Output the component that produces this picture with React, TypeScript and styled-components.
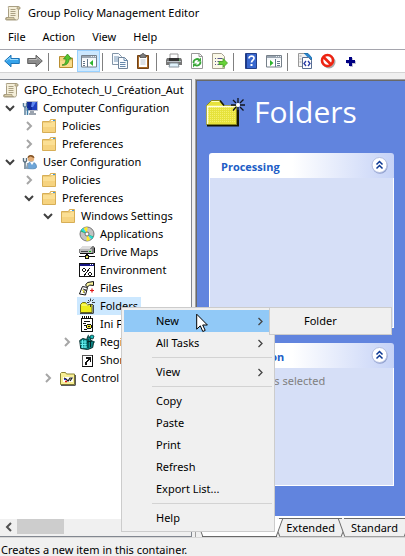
import React from "react";
import styled, { createGlobalStyle, css } from "styled-components";

const GlobalStyle = createGlobalStyle`
  *, *::before, *::after { box-sizing: border-box; }
  html, body { margin: 0; padding: 0; }
  body { background: #f0f0f0; }
  body, button { font-family: "Noto Sans", "Open Sans", sans-serif; font-size: 11px; line-height: 18px; color: #000; }
  button { margin: 0; padding: 0; border: 0; background: none; }
  ul { list-style: none; margin: 0; padding: 0; }
  svg { display: block; flex: none; }
`;

const Window = styled.div`
  position: relative;
  display: flex;
  flex-direction: column;
  min-height: 100vh;
  overflow: hidden;
  white-space: nowrap;
`;

const TitleBar = styled.header`
  display: flex;
  align-items: center;
  gap: 7px;
  height: 25px;
  padding-left: 5px;
  background: #fff;
`;

const WindowTitle = styled.h1`
  margin: 0;
  font-size: 11px;
  font-weight: 400;
`;

const MenuBar = styled.nav`
  display: flex;
  height: 24px;
  padding: 0 0 0 8px;
  gap: 17px;
  background: #fff;
`;

const MenuBarItem = styled.button`
  height: 24px;
`;

const Toolbar = styled.div`
  display: flex;
  height: 24px;
  border-top: 1px solid #a5a5ad;
  border-bottom: 1px solid #d4d4d4;
  background: #fff;
`;

const ToolButton = styled.button<{ $active?: boolean }>`
  display: grid;
  place-items: center;
  width: 23px;
  height: 22px;
  border: 1px solid ${(p) => (p.$active ? "#99d1ff" : "transparent")};
  background: ${(p) => (p.$active ? "#cce8ff" : "transparent")};
`;

const ToolDivider = styled.span`
  width: 8px;
  height: 18px;
  margin-top: 3px;
  &::before {
    content: "";
    display: block;
    width: 1px;
    height: 18px;
    margin-left: 2px;
    background: #808080;
  }
`;

const Workspace = styled.main`
  display: flex;
  flex: 1;
  gap: 3px;
  margin-top: 6px;
`;

const TreePane = styled.aside`
  display: flex;
  flex-direction: column;
  flex: none;
  width: 192px;
  border: 1px solid #828790;
  border-left: 0;
  background: #fff;
`;

const Tree = styled.ul`
  flex: 1;
  padding-top: 1px;
  overflow: hidden;
`;

const TreeRow = styled.li<{ $level: number }>`
  display: flex;
  align-items: center;
  gap: 2px;
  height: 18px;
  padding-left: ${(p) => (p.$level === 0 ? 1 : p.$level * 19 - 17)}px;
`;

const Expander = styled.button<{ $open?: boolean }>`
  display: grid;
  place-items: center;
  flex: none;
  width: 16px;
  height: 18px;
  color: ${(p) => (p.$open ? "#404040" : "#a6a6a6")};
`;

const ExpanderSpace = styled.span`
  flex: none;
  width: 16px;
`;

const TreeEntry = styled.button<{ $selected?: boolean }>`
  display: flex;
  align-items: center;
  gap: 5px;
  height: 18px;
  padding: 0 3px 0 2px;
  background: ${(p) => (p.$selected ? "#cce8ff" : "transparent")};
`;

const ScrollBar = styled.div`
  display: flex;
  height: 17px;
  padding-bottom: 2px;
  background: #f0f0f0;
`;

const ScrollArrow = styled.button`
  display: grid;
  place-items: center;
  width: 17px;
  color: #505050;
`;

const ScrollThumb = styled.span`
  width: 47px;
  background: #cdcdcd;
`;

const DetailPane = styled.section`
  display: flex;
  flex-direction: column;
  flex: 1;
  min-width: 0;
  border-top: 1px solid #a0a0a0;
  border-left: 1px solid #a0a0a0;
`;

const DetailBody = styled.div`
  flex: 1;
  padding: 0 11px 30px 12px;
  border-top: 1px solid #696969;
  border-left: 1px solid #696969;
  background: #6184de;
`;

const DetailHeading = styled.div`
  display: flex;
  align-items: center;
  gap: 9px;
  height: 72px;
  padding-bottom: 10px;
  margin-left: -4px;
`;

const DetailTitle = styled.h2`
  margin: 0;
  font-family: "Open Sans", sans-serif;
  font-size: 30px;
  line-height: 40px;
  font-weight: 400;
  color: #fff;
`;

const Panel = styled.section<{ $tall?: boolean }>`
  display: flex;
  flex-direction: column;
  height: ${(p) => (p.$tall ? 175 : 143)}px;
  margin-bottom: ${(p) => (p.$tall ? 15 : 0)}px;
`;

const PanelHeader = styled.header`
  display: flex;
  align-items: center;
  justify-content: space-between;
  height: 25px;
  padding: 0 6px 0 12px;
  border-radius: 3px 3px 0 0;
  background: linear-gradient(90deg, #fff 0%, #fff 45%, #c6d3f7 100%);
`;

const PanelTitle = styled.h3`
  margin: 3px 0 0;
  font-family: "Open Sans", sans-serif;
  font-size: 11px;
  font-weight: 700;
  color: #215dc6;
`;

const PanelToggle = styled.button`
  width: 17px;
  height: 20px;
`;

const PanelBody = styled.div`
  flex: 1;
  padding: 4px 13px;
  border: 1px solid #fff;
  border-top: 0;
  background: #d6dff7;
  color: #808080;
`;

const TabStrip = styled.div`
  display: flex;
  height: 21px;
  padding: 2px 0 0 6px;
  background: linear-gradient(#fff 2px, #f0f0f0 2px);
  overflow: hidden;
`;

const edge = css`
  content: "";
  position: absolute;
  top: 0;
  bottom: 0;
  width: 6px;
`;

const Tab = styled.button<{ $active?: boolean }>`
  position: relative;
  z-index: ${(p) => (p.$active ? 1 : 0)};
  flex: none;
  height: 19px;
  padding: 0 7px;
  border-top: 1px solid ${(p) => (p.$active ? "#fff" : "#696969")};
  border-bottom: 1px solid ${(p) => (p.$active ? "#696969" : "#a0a0a0")};
  line-height: 18px;
  background: ${(p) => (p.$active ? "#fff" : "#f0f0f0")};
  & + & { margin-left: 2px; }
  &::before {
    ${edge}
    left: -3px;
    border-left: 1px solid #696969;
    background: inherit;
    transform: skewX(20deg);
  }
  &::after {
    ${edge}
    right: -3px;
    border-right: 1px solid #696969;
    background: inherit;
    transform: skewX(-20deg);
  }
`;

const TabText = styled.span`
  position: relative;
  z-index: 1;
`;

const StatusBar = styled.footer`
  height: 19px;
  padding: 3px 1px 0;
  border-top: 1px solid #d7d7d7;
  line-height: 18px;
`;

const PopupMenu = styled.div<{ $sub?: boolean }>`
  position: absolute;
  z-index: ${(p) => (p.$sub ? 3 : 2)};
  top: 307px;
  left: ${(p) => (p.$sub ? 269 : 121)}px;
  width: ${(p) => (p.$sub ? 123 : 154)}px;
  padding: 2px;
  border: 1px solid #ccc;
  background: #f0f0f0;
`;

const MenuItem = styled.button<{ $hot?: boolean }>`
  display: flex;
  align-items: center;
  justify-content: space-between;
  width: 100%;
  height: 22px;
  padding: 0 8px 0 32px;
  background: ${(p) => (p.$hot ? "#91c9f7" : "transparent")};
  text-align: left;
`;

const MenuDivider = styled.div`
  height: 7px;
  margin-left: 28px;
  padding-top: 3px;
  &::before {
    content: "";
    display: block;
    height: 1px;
    background: #d3d3d3;
  }
`;

const Pointer = styled.div`
  position: absolute;
  z-index: 4;
  top: 313px;
  left: 196px;
`;

type IconProps = { children: React.ReactNode; w?: number; h?: number; crisp?: boolean };
const Icon = ({ children, w = 16, h = 16, crisp }: IconProps) => (
  <svg width={w} height={h} viewBox={`0 0 ${w} ${h}`} fill="none" aria-hidden="true" shapeRendering={crisp ? "crispEdges" : undefined}>
    {children}
  </svg>
);

const Chevron = ({ dir }: { dir: "down" | "right" | "left" }) => (
  <Icon w={10} h={10}>
    <path
      d={dir === "down" ? "M1 3l4 4 4-4" : dir === "right" ? "M3 1l4 4-4 4" : "M7 1L3 5l4 4"}
      stroke="currentColor"
      strokeWidth="2"
    />
  </Icon>
);

const SubmenuArrow = () => (
  <Icon w={7} h={9}>
    <path d="M1.500 1l3.500 3.500L1.500 8" stroke="#444" strokeWidth="1.300" />
  </Icon>
);

const ScrollIcon = () => (
  <Icon>
    <path d="M3.500 1.500h10c2 0 2 3 0 3v8c0 2-1 2.500-2 2.500h-10c-1.500 0-1.500-2.500 0-2.500h2v-9c0-1-.5-2 0-2z" fill="#f5efd9" stroke="#a99f83" />
    <path d="M12 2.500c1.500-1.500 3-.5 2.500 1.500H12zM1.500 12.500H9c0 2 1 2 1.500 2h-9z" fill="#d9cda8" stroke="#9b9074" strokeWidth=".7" />
    <path d="M5.500 4.500h5M5.500 6.500h5M5.500 8.500h5M5.500 10.500h5" stroke="#aaa083" />
  </Icon>
);

const FolderIcon = () => (
  <Icon>
    <path d="M1.500 3.500h7l1-2h5v13h-13z" fill="#efcd79" stroke="#d7ae56" />
    <path d="M2 5h8l1-1h3v10H2z" fill="#fbdf94" />
    <path d="M2 9h12v5H2z" fill="#f6d37f" />
    <path d="M10 2.500h3" stroke="#fff" />
    <path d="M12 2.500h2" stroke="#3f9ae0" />
  </Icon>
);

const ComputerIcon = () => (
  <Icon>
    <path d="M4.500 1.500h11v9h-11z" fill="#1c3fc0" stroke="#b9bec8" />
    <path d="M5 2h5v8H5z" fill="#102a9b" />
    <path d="M10 2h4l-3 5h-2z" fill="#5c86f0" />
    <path d="M8 11h4v2h2v2H7v-2h1z" fill="#9aa3ae" />
    <path d="M1.500 3v3l1 1h1l1-1V3M3 7v8" stroke="#5a7f9c" strokeWidth="1.500" />
    <path d="M5.500 8v7" stroke="#3e7ea8" strokeWidth="1.500" />
  </Icon>
);

const UserIcon = () => (
  <Icon>
    <circle cx="9" cy="4.500" r="3.200" fill="#e3ad77" />
    <path d="M5.500 4C5.500 0 12 0 12.500 4c-2 0-3-1.500-4-1.500S7 4 5.500 4z" fill="#805225" />
    <path d="M4.500 14.500C5 9.500 7 8 9.500 8s5 1.500 5 5c0 1.500-2 1.800-4 1.800z" fill="#6fa6d8" stroke="#4a7eac" strokeWidth=".7" />
    <path d="M8 8l2 3 2-3z" fill="#fff" />
    <path d="M1.500 4v3l1 1h1l1-1V4M3 8v7" stroke="#5a7080" strokeWidth="1.400" />
    <path d="M5.500 9v6" stroke="#8fa1ad" strokeWidth="1.400" />
  </Icon>
);

const DiscIcon = () => (
  <Icon>
    <circle cx="8" cy="8" r="7" fill="#c3c3c3" stroke="#777" />
    <path d="M8 8L5 1.700 8.500 1zM8 8l3 6.300-3.500.7z" fill="#ffee20" />
    <path d="M8 8L1.500 5.500 3 3zM8 8l6.500 2.500L13 13z" fill="#27b06f" />
    <path d="M8 8L2 4l2-2zM8 8l6 3-1.500 2z" fill="#28dede" />
    <circle cx="8" cy="8" r="2" fill="#fff" stroke="#555" strokeWidth=".8" />
  </Icon>
);

const DriveIcon = () => (
  <Icon crisp>
    <path d="M3 2h11l2 2v4l-2 2H1L0 8V5z" fill="#808080" />
    <path d="M3 2h10l-2 3H1z" fill="#dedede" />
    <path d="M1 5h12v4H1z" fill="#b9b9b9" />
    <path d="M2 7h7v1H2z" fill="#444" />
    <path d="M10 7h2v1h-2z" fill="#0c0" />
    <path d="M1 9h13v1H1zM15 4h1v5h-1zM7 10h2v2H7zM0 12h16v1H0zM6 11h4v4H6z" fill="#111" />
    <path d="M7 12h2v2H7z" fill="#e5df63" />
  </Icon>
);

const EnvironmentIcon = () => (
  <Icon crisp>
    <path d="M.5 1.500h15v13H.5z" fill="#fff" stroke="#111" />
    <path d="M1 2h14v2H1z" fill="#151583" />
    <path d="M11 2h1v1h-1zM13 2h1v1h-1z" fill="#fff" />
    <path d="M4 6h2v1h1v2H6v1H4V9H3V7h1zM10 10h2v1h1v2h-1v1h-2v-1H9v-2h1z" fill="#111" />
    <path d="M4 7h2v2H4zM10 11h2v2h-2z" fill="#fff" />
    <path d="M11 6L5 14" stroke="#111" />
  </Icon>
);

const FilesIcon = () => (
  <Icon>
    <path d="M3.500 6.500l5 1-2 7.500-6-1 1.500-4z" fill="#fff" stroke="#111" />
    <path d="M8.500 2.500l6-1v4l-4-.5-2 2-2-2z" fill="#f8f39b" stroke="#111" />
    <path d="M4 9l3 1-3 2 2 1" stroke="#111" strokeWidth=".8" />
    <path d="M3 10l2 1-1 2" stroke="#dfd329" />
    <path d="M11 10.500h4M13 8.500v4" stroke="#e01818" strokeWidth="1.200" />
  </Icon>
);

const NewFolderIcon = () => (
  <Icon>
    <path d="M1.500 14.500v-8l2-2h3l1.500 2h5v8z" fill="#eeee1b" stroke="#74741a" />
    <path d="M2.500 7h8" stroke="#ffffaa" />
    <path d="M1 15.300h13.300V8" stroke="#222" />
    <path d="M11.500.5v3M11.500 6v3M8 4.500h2.500M13 4.500h3M9 2l1.500 1.500M14.500 1.500L13 3M9 7.500l1.500-1.500M13 6l2 2" stroke="#292929" strokeWidth=".9" />
    <circle cx="11.500" cy="4.500" r="1" fill="#fff" />
  </Icon>
);

const LargeNewFolderIcon = () => (
  <Icon w={40} h={30}>
    <path d="M2 28.500h31V13" stroke="#151500" strokeWidth="2" />
    <path d="M1.500 27.500V8.500l5-5h8l4 5h13v19z" fill="#e6e23c" stroke="#8a8a20" />
    <path d="M3 10.500h27M3 12.500h27M3 14.500h27M3 16.500h27M3 18.500h27M3 20.500h27M3 22.500h27M3 24.500h27" stroke="#f4f06a" strokeDasharray="1 1" />
    <path d="M2.500 27V9.500h28" stroke="#ffffe0" strokeWidth="1.500" />
    <path d="M6.500 4.500h8" stroke="#ffffc0" />
    <path d="M15 3.500l4 5" stroke="#1a1a00" strokeWidth="1.500" />
    <path d="M33 1v5M33 10v5M26 8h5M35 8h5M28 3l3 3M35 10l3.500 3.500M38.500 2.500L35 6M31 10l-3 3.500" stroke="#10131c" strokeWidth="1.300" />
    <circle cx="33" cy="8" r="2" fill="#fff" />
  </Icon>
);

const IniIcon = () => (
  <Icon crisp>
    <path d="M2.500 2.500h11v13h-11z" fill="#fff" stroke="#111" />
    <path d="M3 0h1v3H3zM5 0h1v3H5zM7 0h1v3H7zM9 0h1v3H9zM11 0h1v3h-1zM5 5h6v1H5zM4 7h3v1H4zM5 9h2v1H5zM5 13h3v1H5z" fill="#111" />
    <path d="M8 8h4v1h1v3h-1v1H8v-1H7V9h1z" fill="#111" />
    <path d="M8 9h4v3H8z" fill="#efe42c" />
    <path d="M9 10h2v1H9z" fill="#111" />
  </Icon>
);

const RegistryIcon = () => (
  <Icon>
    <path d="M.7 6.500l3-2 4 1 1-3 3 1v3l3 1-1 6-5 2-7-1z" fill="#0c8585" stroke="#052b2b" />
    <path d="M1.500 8h6M1.500 10.500h6M2 13h6M3.500 6v8M6 6v8" stroke="#65efef" />
    <path d="M9 5v9M11.500 7v6M8 8l5-1" stroke="#022" />
    <path d="M11 2l2-1 2 1-1 3-3-1z" fill="#18bcbc" stroke="#033" strokeWidth=".8" />
    <path d="M8.500 2l1.500-1M15 7v2" stroke="#055" />
  </Icon>
);

const ShortcutIcon = () => (
  <Icon crisp>
    <path d="M3.500 3.500h10v11h-10z" fill="#fff" stroke="#555" />
    <path d="M3 14h11v1H3zM13 3h1v12h-1z" fill="#111" />
    <path d="M7 5h5v5h-1V8h-1v1H9v1H8v3H6v-3h1V9h1V8h1V7H7z" fill="#111" />
  </Icon>
);

const ControlPanelIcon = () => (
  <Icon>
    <path d="M.5 14.500v-11l1-1h4l1 1.500h8v10.500z" fill="#f7ee94" stroke="#8b8434" />
    <path d="M1 15.300h14.300V5" stroke="#333" />
    <path d="M3 7h10v5H3z" fill="#fff" />
    <path d="M4 8l2 1 2 2 2-3h2l-2 3" stroke="#222" strokeWidth="1.200" />
    <path d="M5 11.500h2" stroke="#d11" strokeWidth="1.300" />
    <path d="M4 9.500h2" stroke="#23d" strokeWidth="1.200" />
  </Icon>
);

const ArrowIcon = ({ back }: { back?: boolean }) => (
  <Icon>
    <g transform={back ? undefined : "matrix(-1 0 0 1 16 0)"}>
      <path d="M.7 8L7 2.200v3.300h8.300v5H7v3.300z" fill={back ? "#36a3ea" : "#8b8b8b"} stroke={back ? "#1d75b8" : "#606060"} />
      <path d="M2.500 7.500L6 4.500v2h8" stroke={back ? "#9bdbff" : "#b9b9b9"} />
    </g>
  </Icon>
);

const UpFolderIcon = () => (
  <Icon>
    <path d="M1.500 14.500v-11h5l1.500 1.500h6.500v9.500z" fill="#f2d27d" stroke="#b98e31" />
    <path d="M2 8h12v6H2z" fill="#f9dc8c" />
    <path d="M4 12c3 0 4-3 4-6H5.500L9.500 1l4 5h-2.500c0 4-3 7-7 6z" fill="#55c42f" stroke="#348b18" strokeWidth=".8" />
  </Icon>
);

const WindowIcon = ({ left }: { left?: boolean }) => (
  <Icon>
    <path d="M.5 2.500h15v11.500H.5z" fill="#fff" stroke="#76808a" />
    <path d="M1 3h14v2H1z" fill="#9aa5b0" />
    <path d="M10 3.500h1M12 3.500h1M14 3.500h1M1 6h14" stroke="#e7edf2" />
    <path d={left ? "M6.500 6v8M2 8.500h2M2 10.500h2M2 12.500h2" : "M9.500 6v8M11 8.500h3M11 10.500h3M11 12.500h3"} stroke="#64788c" />
    <path d={left ? "M12 7v6L8.500 10z" : "M4 7v6l3.500-3z"} fill="#2eb52e" />
  </Icon>
);

const CopyIcon = () => (
  <Icon>
    <path d="M.5.5h6L9.500 3.500v8h-9z" fill="#f9fcff" stroke="#8295a8" />
    <path d="M2 4h5M2 6h5M2 8h5" stroke="#7796b5" />
    <path d="M6.500 4.500h6l3 3v8h-9z" fill="#f9fcff" stroke="#71859a" />
    <path d="M12 4.500v3h3.500M8 9.500h5.500M8 11.500h5.500M8 13.500h5.500" stroke="#6689ad" />
  </Icon>
);

const PasteIcon = () => (
  <Icon>
    <path d="M2.500 2.500h11v13h-11z" fill="#a96925" stroke="#724217" />
    <path d="M4 4h8v10H4z" fill="#fff" />
    <path d="M5.500 7h5M5.500 9h5M5.500 11h5" stroke="#b9c3cc" />
    <path d="M5 2h1.500c0-2 3-2 3 0H11v2.500H5z" fill="#7e7e7e" stroke="#444" strokeWidth=".7" />
  </Icon>
);

const PrintIcon = () => (
  <Icon>
    <path d="M4 1h8v5H4z" fill="#fff" stroke="#999" />
    <path d="M1 5h14l1 2v5H0V7z" fill="#777" />
    <path d="M3 5h10v3H3z" fill="#333" />
    <path d="M1 8.500h14" stroke="#bcc2c8" />
    <path d="M4 10h8l1 4H3z" fill="#dff2fb" stroke="#86939c" />
    <path d="M13 7h1" stroke="#48d848" />
  </Icon>
);

const RefreshIcon = () => (
  <Icon>
    <path d="M2.500.5h8l3 3v12h-11z" fill="#fff" stroke="#999" />
    <path d="M10 .5v3h3.500" stroke="#999" />
    <path d="M4.500 10A3.600 3.600 0 0 1 10.500 7M11.500 8.500A3.600 3.600 0 0 1 6 12" stroke="#38a838" strokeWidth="1.800" />
    <path d="M12 4.500v4H8zM4 14.500v-4h4z" fill="#38a838" />
  </Icon>
);

const ExportIcon = () => (
  <Icon>
    <path d="M.5.5h9l3 3v12H.5z" fill="#fbf9e7" stroke="#a6a191" />
    <path d="M3 5.500h1M5.500 5.500h5M3 8.500h1M5.500 8.500h4M3 11.500h1M5.500 11.500h4" stroke="#54548b" />
    <path d="M7 8.500h4V5.500l4.500 4.500-4.500 4.500v-3H7z" fill="#68d338" stroke="#47a124" strokeWidth=".8" />
  </Icon>
);

const HelpIcon = () => (
  <Icon>
    <path d="M2.500.5h11v15h-11z" fill="#3867ce" stroke="#243f88" />
    <path d="M3.500 1v14" stroke="#1c3989" />
    <path d="M6 5.500c0-3.500 5.500-3 5 0-.2 1.500-2.500 2-2.500 4" stroke="#fff" strokeWidth="1.700" />
    <path d="M7.500 11h2v2h-2z" fill="#fff" />
  </Icon>
);

const CodePageIcon = () => (
  <Icon>
    <path d="M1.500.5h8l3 3v10h-11z" fill="#f2f2f2" stroke="#999" />
    <path d="M7 .5h4l3.500 4v4" fill="#2a86cf" stroke="#2071ae" />
    <path d="M2.500 3h2M2.500 6h2M2.500 9h2" stroke="#aaa" />
    <path d="M5.500 4.500h6l3 3v8h-9z" fill="#fff" stroke="#596e91" />
    <path d="M9 8L7 10.500 9 13M11 8l2 2.500-2 2.500" stroke="#2639a4" strokeWidth="1.300" />
  </Icon>
);

const ForbiddenIcon = () => (
  <Icon>
    <circle cx="9" cy="9" r="5.500" stroke="#aaa" strokeWidth="2" />
    <circle cx="7.500" cy="7.500" r="5.500" fill="#fff" stroke="#ed2412" strokeWidth="2.600" />
    <path d="M3.500 4l8 8" stroke="#ed2412" strokeWidth="2.600" />
  </Icon>
);

const PlusIcon = () => (
  <Icon crisp>
    <path d="M7 5h3v3h3v3h-3v3H7v-3H4V8h3z" fill="#c4c4d6" />
    <path d="M6 4h3v3h3v3H9v3H6v-3H3V7h3z" fill="#000083" />
  </Icon>
);

const CollapseIcon = () => (
  <Icon w={17} h={20}>
    <circle cx="9" cy="10" r="7.700" fill="#8f9fce" />
    <circle cx="8.500" cy="9" r="7.500" fill="#fff" stroke="#b4bfe0" />
    <path d="M5.500 8.500l3-3 3 3M5.500 12.500l3-3 3 3" stroke="#0a3792" strokeWidth="1.500" />
  </Icon>
);

const PointerIcon = () => (
  <Icon w={12} h={20}>
    <path d="M.7 1.200v15l3.600-3.400 2.500 5.700 2.400-1.100-2.500-5.400h4.700z" fill="#fff" stroke="#000" />
  </Icon>
);

type Node = { level: number; label: string; icon: React.ReactNode; open?: boolean; closed?: boolean; selected?: boolean };
const nodes: Node[] = [
  { level: 0, label: "GPO_Echotech_U_Création_Aut", icon: <ScrollIcon /> },
  { level: 1, label: "Computer Configuration", icon: <ComputerIcon />, open: true },
  { level: 2, label: "Policies", icon: <FolderIcon />, closed: true },
  { level: 2, label: "Preferences", icon: <FolderIcon />, closed: true },
  { level: 1, label: "User Configuration", icon: <UserIcon />, open: true },
  { level: 2, label: "Policies", icon: <FolderIcon />, closed: true },
  { level: 2, label: "Preferences", icon: <FolderIcon />, open: true },
  { level: 3, label: "Windows Settings", icon: <FolderIcon />, open: true },
  { level: 4, label: "Applications", icon: <DiscIcon /> },
  { level: 4, label: "Drive Maps", icon: <DriveIcon /> },
  { level: 4, label: "Environment", icon: <EnvironmentIcon /> },
  { level: 4, label: "Files", icon: <FilesIcon /> },
  { level: 4, label: "Folders", icon: <NewFolderIcon />, selected: true },
  { level: 4, label: "Ini Files", icon: <IniIcon /> },
  { level: 4, label: "Registry", icon: <RegistryIcon />, closed: true },
  { level: 4, label: "Shortcuts", icon: <ShortcutIcon /> },
  { level: 3, label: "Control Panel", icon: <ControlPanelIcon />, closed: true },
];

type Tool = { label: string; icon: React.ReactNode; active?: boolean };
const toolGroups: Tool[][] = [
  [{ label: "Back", icon: <ArrowIcon back /> }, { label: "Forward", icon: <ArrowIcon /> }],
  [{ label: "Up one level", icon: <UpFolderIcon /> }, { label: "Show console tree", icon: <WindowIcon left />, active: true }],
  [{ label: "Copy", icon: <CopyIcon /> }, { label: "Paste", icon: <PasteIcon /> }],
  [{ label: "Print", icon: <PrintIcon /> }, { label: "Refresh", icon: <RefreshIcon /> }, { label: "Export list", icon: <ExportIcon /> }],
  [{ label: "Help", icon: <HelpIcon /> }, { label: "Show action pane", icon: <WindowIcon /> }],
  [{ label: "Display XML", icon: <CodePageIcon /> }, { label: "Disable", icon: <ForbiddenIcon /> }, { label: "Add", icon: <PlusIcon /> }],
];

const menuGroups = [["New", "All Tasks"], ["View"], ["Copy", "Paste", "Print", "Refresh", "Export List..."], ["Help"]];
const withSubmenu = ["New", "All Tasks", "View"];

export default function App() {
  return (
    <Window>
      <GlobalStyle />
      <TitleBar>
        <ScrollIcon />
        <WindowTitle>Group Policy Management Editor</WindowTitle>
      </TitleBar>
      <MenuBar>
        {["File", "Action", "View", "Help"].map((m) => (
          <MenuBarItem key={m}>{m}</MenuBarItem>
        ))}
      </MenuBar>
      <Toolbar role="toolbar">
        {toolGroups.map((group, i) => (
          <React.Fragment key={i}>
            {i > 0 && <ToolDivider />}
            {group.map((t) => (
              <ToolButton key={t.label} aria-label={t.label} $active={t.active}>
                {t.icon}
              </ToolButton>
            ))}
          </React.Fragment>
        ))}
      </Toolbar>
      <Workspace>
        <TreePane>
          <Tree>
            {nodes.map((n, i) => (
              <TreeRow key={i} $level={n.level}>
                {n.open || n.closed ? (
                  <Expander $open={n.open} aria-expanded={!!n.open} aria-label={`Toggle ${n.label}`}>
                    <Chevron dir={n.open ? "down" : "right"} />
                  </Expander>
                ) : (
                  n.level > 0 && <ExpanderSpace />
                )}
                <TreeEntry $selected={n.selected}>
                  {n.icon}
                  {n.label}
                </TreeEntry>
              </TreeRow>
            ))}
          </Tree>
          <ScrollBar>
            <ScrollArrow aria-label="Scroll left">
              <Chevron dir="left" />
            </ScrollArrow>
            <ScrollThumb />
          </ScrollBar>
        </TreePane>
        <DetailPane>
          <DetailBody>
            <DetailHeading>
              <LargeNewFolderIcon />
              <DetailTitle>Folders</DetailTitle>
            </DetailHeading>
            <Panel $tall>
              <PanelHeader>
                <PanelTitle>Processing</PanelTitle>
                <PanelToggle aria-label="Collapse Processing">
                  <CollapseIcon />
                </PanelToggle>
              </PanelHeader>
              <PanelBody />
            </Panel>
            <Panel>
              <PanelHeader>
                <PanelTitle>Description</PanelTitle>
                <PanelToggle aria-label="Collapse Description">
                  <CollapseIcon />
                </PanelToggle>
              </PanelHeader>
              <PanelBody>No policies selected</PanelBody>
            </Panel>
          </DetailBody>
          <TabStrip>
            <Tab $active>
              <TabText>Preferences</TabText>
            </Tab>
            <Tab>
              <TabText>Extended</TabText>
            </Tab>
            <Tab>
              <TabText>Standard</TabText>
            </Tab>
          </TabStrip>
        </DetailPane>
      </Workspace>
      <StatusBar>Creates a new item in this container.</StatusBar>
      <PopupMenu role="menu">
        {menuGroups.map((group, i) => (
          <React.Fragment key={i}>
            {i > 0 && <MenuDivider />}
            {group.map((label) => (
              <MenuItem key={label} role="menuitem" $hot={label === "New"}>
                {label}
                {withSubmenu.includes(label) && <SubmenuArrow />}
              </MenuItem>
            ))}
          </React.Fragment>
        ))}
      </PopupMenu>
      <PopupMenu role="menu" $sub>
        <MenuItem role="menuitem">Folder</MenuItem>
      </PopupMenu>
      <Pointer>
        <PointerIcon />
      </Pointer>
    </Window>
  );
}
